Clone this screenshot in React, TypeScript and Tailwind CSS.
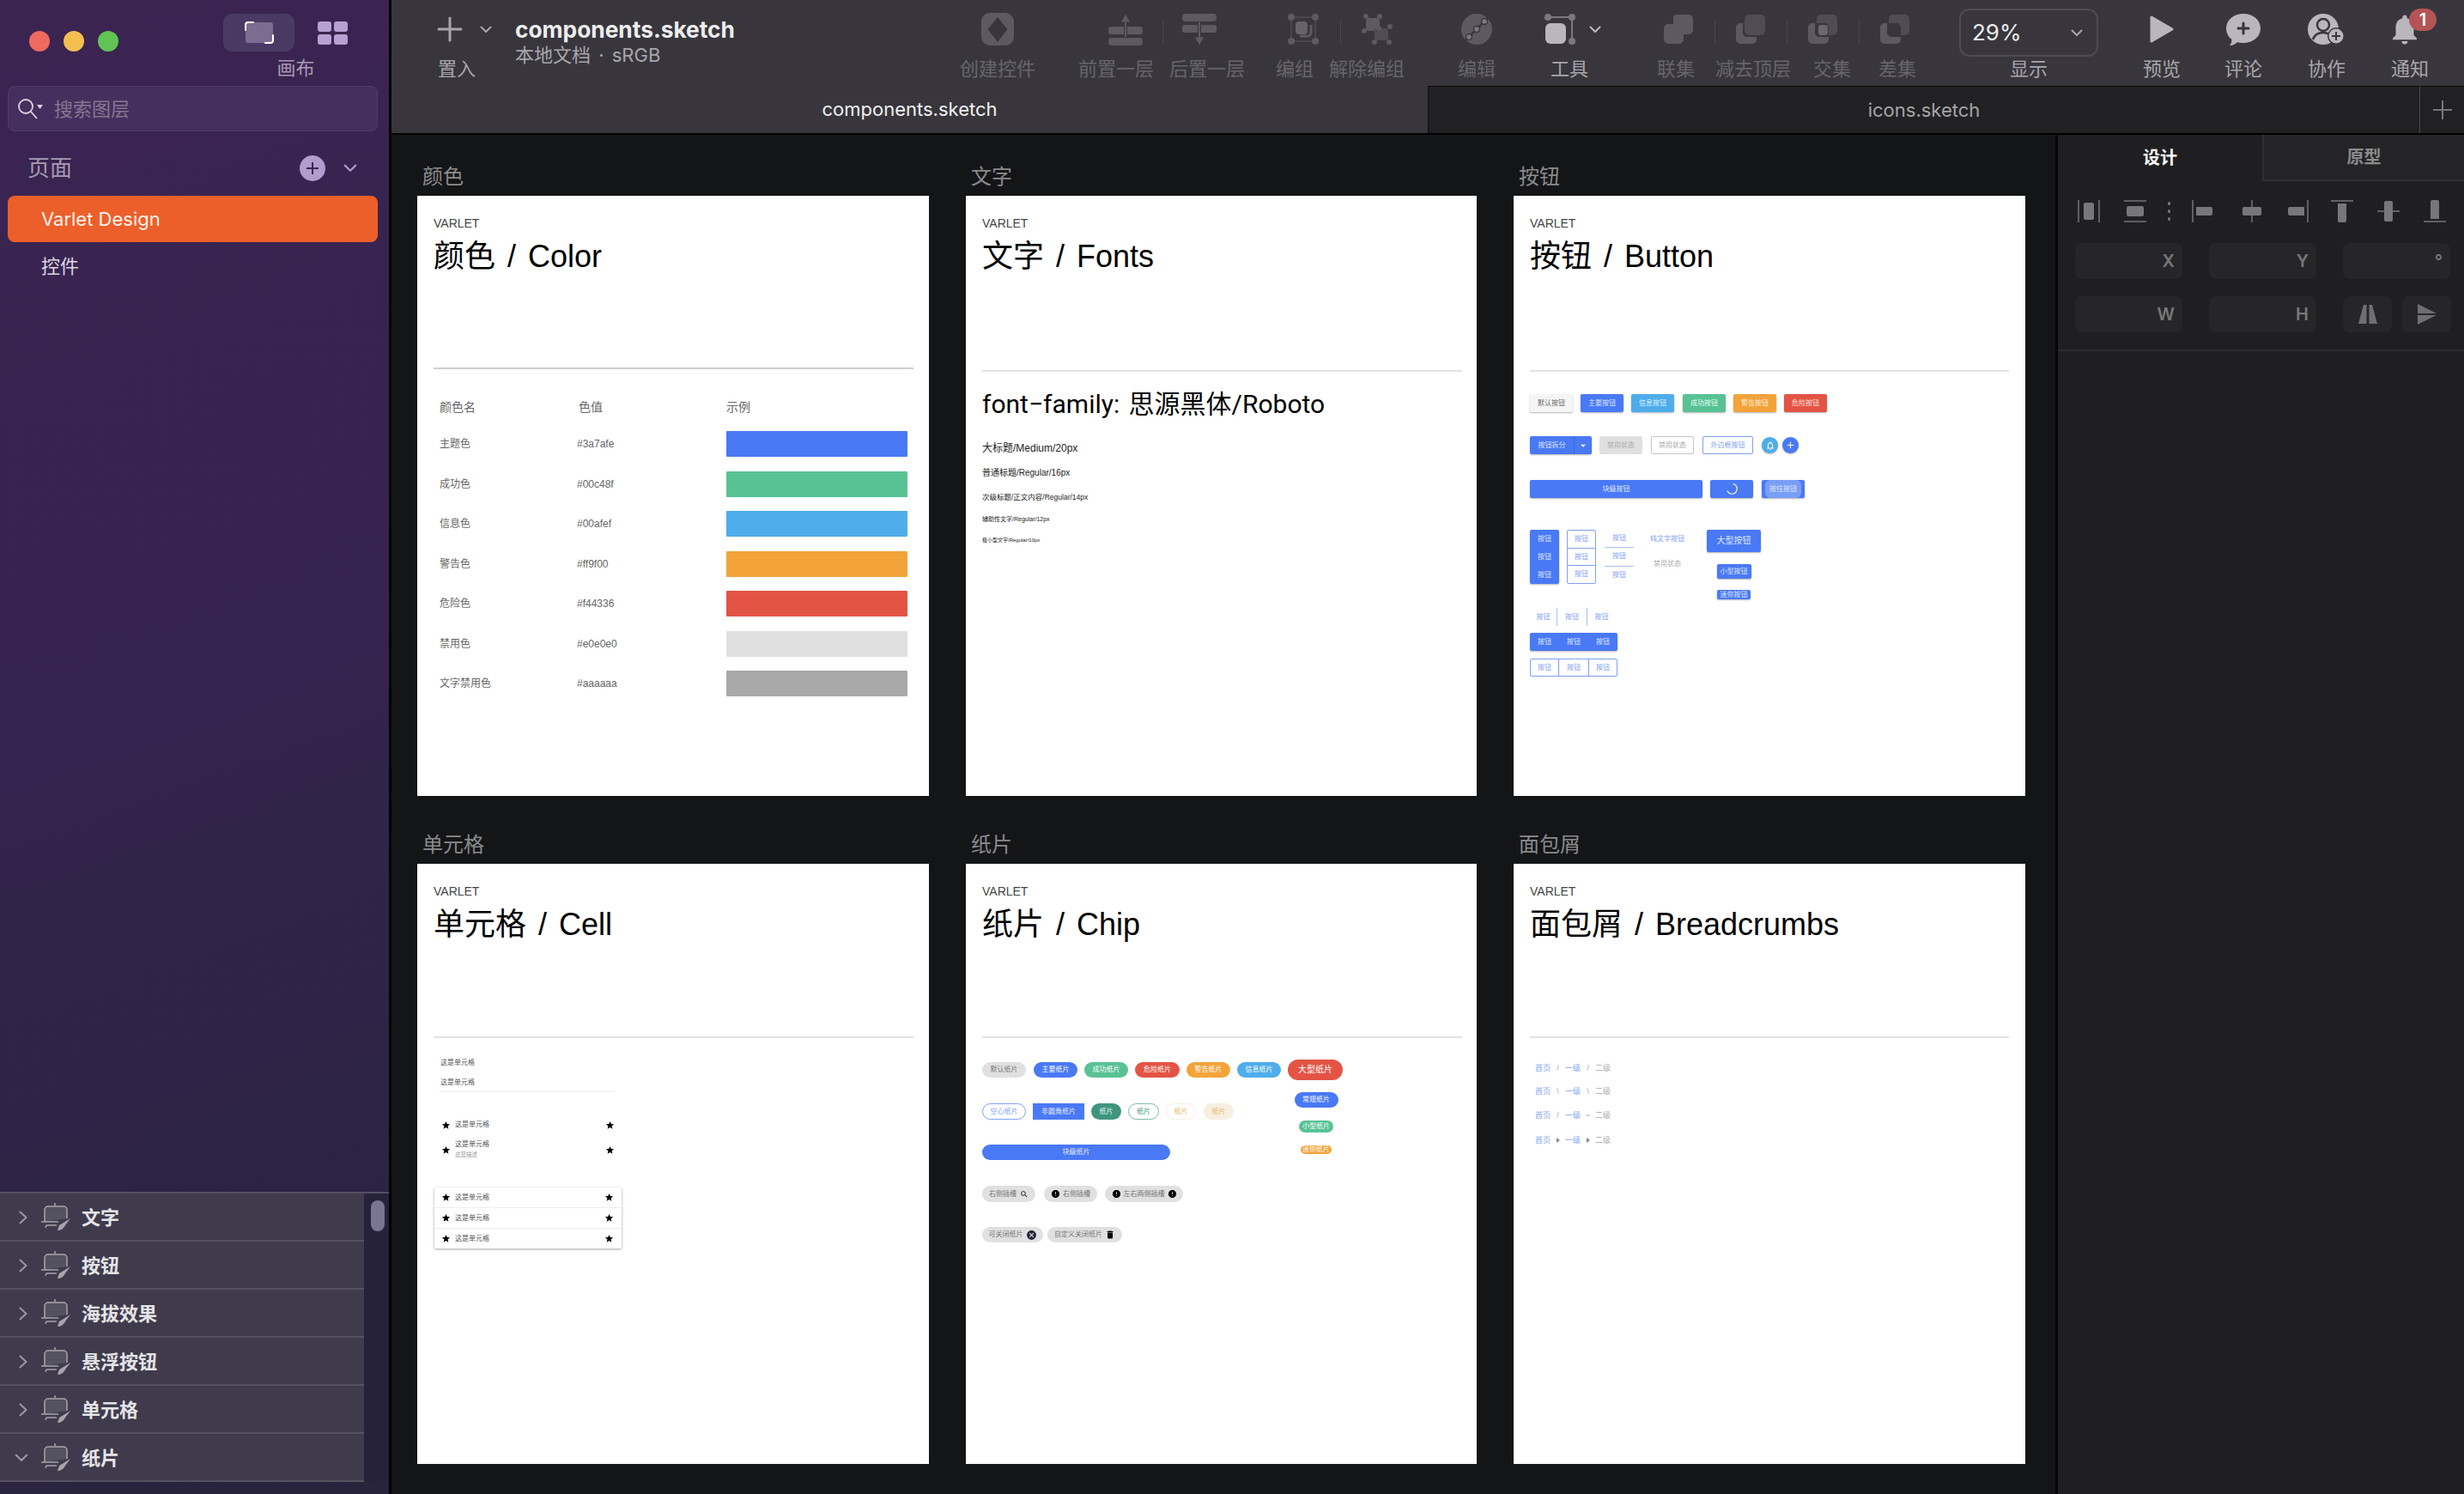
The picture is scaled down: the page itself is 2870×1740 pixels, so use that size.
import React from 'react'
import { MdAdd, MdArrowDropDown, MdCancel, MdDelete, MdError, MdNotifications, MdNotificationsNone, MdSearch, MdStar } from 'react-icons/md'

const DIM = '#5c5a60'
const LIT = '#b9b6be'

function Chevron({ className = '', color = '#a8a6ac' }: { className?: string; color?: string }) {
  return (
    <svg className={className} viewBox="0 0 14 9" fill="none" stroke={color} strokeWidth="2" strokeLinecap="round" strokeLinejoin="round">
      <path d="M1.5 1.5 7 7l5.5-5.5" />
    </svg>
  )
}

function Tool({ label, className, lit, children }: { label: string; className: string; lit?: boolean; children: React.ReactNode }) {
  return (
    <div className={`flex h-full shrink-0 flex-col items-center ${className}`}>
      <div className="flex h-[70px] w-full items-center justify-center pb-[8px] pt-[6px]">{children}</div>
      <span className={`whitespace-nowrap text-[22px] leading-[20px] ${lit ? 'text-[#a8a6ac]' : 'text-[#67656b]'}`}>{label}</span>
    </div>
  )
}

function Sep({ className }: { className: string }) {
  return <div className={`mt-[24px] h-[28px] w-px shrink-0 bg-[#47454b] ${className}`} />
}

function PathOps({ kind, className }: { kind: 'union' | 'subtract' | 'intersect' | 'diff'; className: string }) {
  return (
    <svg className={className} width="34" height="34" viewBox="0 0 34 34" fill={DIM}>
      {kind === 'union' && <path d="M15 0h14a5 5 0 0 1 5 5v13a5 5 0 0 1-5 5h-6v6a5 5 0 0 1-5 5H5a5 5 0 0 1-5-5V16a5 5 0 0 1 5-5h6V4a4 4 0 0 1 4-4z" />}
      {kind === 'subtract' && (
        <>
          <rect x="10" y="0" width="24" height="24" rx="5" fill="#4f4d53" />
          <path d="M5 10h3v11a5 5 0 0 0 5 5h11v3a5 5 0 0 1-5 5H5a5 5 0 0 1-5-5V15a5 5 0 0 1 5-5z" />
        </>
      )}
      {(kind === 'intersect' || kind === 'diff') && (
        <>
          <path fillRule="evenodd" d="M15 0h14a5 5 0 0 1 5 5v14a5 5 0 0 1-5 5h-5v-9a5 5 0 0 0-5-5h-9V5a5 5 0 0 1 5-5z" fill="#4f4d53" />
          <path d="M5 10h3v11a5 5 0 0 0 5 5h11v3a5 5 0 0 1-5 5H5a5 5 0 0 1-5-5V15a5 5 0 0 1 5-5z" />
          <rect x="12" y="12" width="11" height="12" rx="3" fill={kind === 'intersect' ? '#6a686e' : '#38363c'} />
        </>
      )}
    </svg>
  )
}

function Toolbar() {
  return (
    <div className="flex h-[100px] shrink-0 bg-[#38363c]">
      <Tool label="置入" lit className="ml-[54px] w-[44px]">
        <svg className="translate-x-[-13px]" width="30" height="30" viewBox="0 0 30 30" stroke="#a8a6ac" strokeWidth="3" strokeLinecap="round">
          <path d="M15 2v26M2 15h26" />
        </svg>
        <Chevron className="ml-[7px] mr-[-30px] h-[9px] w-[14px] shrink-0" />
      </Tool>
      <div className="ml-[46px] w-[255px] shrink-0 pt-[18px]">
        <div className="whitespace-nowrap text-[26.300px] font-bold leading-[34px] text-[#ededee]">components.sketch</div>
        <div className="mt-[-3px] whitespace-nowrap text-[22px] leading-[30px] text-[#a8a6ac] [word-spacing:3px]">本地文档 · sRGB</div>
      </div>
      <Tool label="创建控件" className="ml-[263px] w-[88px]">
        <svg width="38" height="38" viewBox="0 0 38 38">
          <path fill={DIM} fillRule="evenodd" d="M10 0h18a10 10 0 0 1 10 10v18a10 10 0 0 1-10 10H10A10 10 0 0 1 0 28V10A10 10 0 0 1 10 0zm9 5L7.500 19 19 34l11.500-15z" />
        </svg>
      </Tool>
      <Tool label="前置一层" className="ml-[50px] w-[88px]">
        <svg className="translate-x-[11px]" width="40" height="37" viewBox="0 0 40 37" fill={DIM}>
          <rect x="0" y="15" width="40" height="9" rx="3" />
          <rect x="0" y="28" width="40" height="9" rx="4" />
          <path d="M20 0l6 10h-4.500v18h-3V10H14z" stroke="#38363c" strokeWidth="1" />
        </svg>
      </Tool>
      <Sep className="ml-[10px]" />
      <Tool label="后置一层" className="ml-[7px] w-[88px]">
        <svg className="translate-x-[-9px]" width="40" height="37" viewBox="0 0 40 37" fill={DIM}>
          <rect x="0" y="0" width="40" height="9" rx="4" />
          <rect x="0" y="13" width="40" height="9" rx="3" />
          <path d="M20 37l-6-10h4.500V9h3v18H26z" stroke="#38363c" strokeWidth="1" />
        </svg>
      </Tool>
      <Tool label="编组" className="ml-[36px] w-[44px]">
        <svg className="translate-x-[10px]" width="36" height="36" viewBox="0 0 36 36" fill={DIM}>
          <path d="M4 4h28v28H4z" fill="none" stroke="#49474d" strokeWidth="2" />
          <circle cx="4" cy="4" r="4" />
          <circle cx="32" cy="4" r="4" />
          <circle cx="4" cy="32" r="4" />
          <circle cx="32" cy="32" r="4" />
          <rect x="9" y="9" width="14" height="15" rx="4" fill="#66646a" />
          <path d="M14 26h9a4 4 0 0 0 4-4v-9" fill="none" stroke={DIM} strokeWidth="3" />
        </svg>
      </Tool>
      <Sep className="ml-[31px]" />
      <Tool label="解除编组" className="ml-[-14px] w-[88px]">
        <svg className="translate-x-[12px]" width="36" height="36" viewBox="0 0 36 36" fill={DIM}>
          <rect x="5" y="5" width="16" height="15" rx="3" />
          <rect x="15" y="17" width="16" height="14" rx="3" fill="#4f4d53" />
          <circle cx="5" cy="3" r="3" />
          <circle cx="21" cy="3" r="3" />
          <circle cx="3" cy="20" r="3" />
          <circle cx="20" cy="17" r="3" />
          <circle cx="33" cy="15" r="3" />
          <circle cx="15" cy="33" r="3" />
          <circle cx="32" cy="33" r="3" />
        </svg>
      </Tool>
      <Tool label="编辑" className="ml-[62px] w-[44px]">
        <svg width="36" height="36" viewBox="0 0 36 36">
          <circle cx="18" cy="18" r="18" fill={DIM} />
          <path d="M3 33 33 3" stroke="#38363c" strokeWidth="2.500" />
          <circle cx="27" cy="9" r="3.500" fill="#7a787e" stroke="#38363c" strokeWidth="1.500" />
          <circle cx="18" cy="18" r="3.500" fill="#7a787e" stroke="#38363c" strokeWidth="1.500" />
          <circle cx="9" cy="27" r="3.500" fill="#7a787e" stroke="#38363c" strokeWidth="1.500" />
        </svg>
      </Tool>
      <Tool label="工具" lit className="ml-[64px] w-[44px]">
        <svg className="ml-[-14px] shrink-0" width="36" height="36" viewBox="0 0 36 36" fill="#7b797f">
          <path d="M4 4h28v28" fill="none" stroke="#7b797f" strokeWidth="2" />
          <circle cx="4" cy="4" r="4" />
          <circle cx="32" cy="4" r="4" />
          <circle cx="32" cy="32" r="4" />
          <rect x="1" y="11" width="24" height="24" rx="6" fill={LIT} />
        </svg>
        <Chevron className="ml-[16px] mr-[-22px] h-[9px] w-[14px] shrink-0" color={LIT} />
      </Tool>
      <Tool label="联集" className="ml-[80px] w-[44px]">
        <PathOps kind="union" className="translate-x-[3px]" />
      </Tool>
      <Sep className="ml-[23px]" />
      <Tool label="减去顶层" className="w-[88px]">
        <PathOps kind="subtract" className="translate-x-[-3px]" />
      </Tool>
      <Sep className="ml-[-5px]" />
      <Tool label="交集" className="ml-[30px] w-[44px]">
        <PathOps kind="intersect" className="translate-x-[-11px]" />
      </Tool>
      <Sep className="ml-[9px]" />
      <Tool label="差集" className="ml-[22px] w-[44px]">
        <PathOps kind="diff" className="translate-x-[-3px]" />
      </Tool>
      <div className="ml-[50px] flex w-[162px] shrink-0 flex-col items-center pt-[10px]">
        <div className="flex h-[56px] w-full items-center justify-between rounded-[12px] border-2 border-[#4e4c52] pl-[13px] pr-[16px]">
          <span className="text-[26px] leading-none text-[#ececed]">29%</span>
          <Chevron className="h-[9px] w-[14px]" />
        </div>
        <span className="mt-[4px] text-[22px] leading-[20px] text-[#a8a6ac]">显示</span>
      </div>
      <Tool label="预览" lit className="ml-[52px] w-[44px]">
        <svg width="28" height="32" viewBox="0 0 28 32">
          <path fill={LIT} stroke={LIT} strokeWidth="3" strokeLinejoin="round" d="M2 2 26 16 2 30z" />
        </svg>
      </Tool>
      <Tool label="评论" lit className="ml-[51px] w-[44px]">
        <svg width="40" height="37" viewBox="0 0 40 37">
          <path fill={LIT} d="M20 0c11 0 20 7 20 17S31 34 20 34c-3 0-5-.4-7-1-2 2-5 4-9 4 1.500-2 2.500-4 2.500-7C2.500 27 0 22 0 17 0 7 9 0 20 0z" />
          <path d="M20 11v12M14 17h12" stroke="#38363c" strokeWidth="3" strokeLinecap="round" />
        </svg>
      </Tool>
      <Tool label="协作" lit className="ml-[53px] w-[44px]">
        <svg width="44" height="37" viewBox="0 0 44 37">
          <circle cx="18" cy="18" r="18" fill={LIT} />
          <circle cx="18" cy="13" r="7" fill={LIT} stroke="#38363c" strokeWidth="2.500" />
          <path d="M6 30c2-6 7-8 12-8 3 0 5 .6 7 2" fill="none" stroke="#38363c" strokeWidth="2.500" />
          <circle cx="33" cy="26" r="10" fill="#38363c" />
          <circle cx="33" cy="26" r="8.500" fill={LIT} />
          <path d="M33 21v10M28 26h10" stroke="#38363c" strokeWidth="2" />
        </svg>
      </Tool>
      <Tool label="通知" lit className="relative ml-[53px] w-[44px]">
        <MdNotifications className="ml-[-12px] shrink-0 text-[#b9b6be]" size={42} />
        <span className="absolute left-[21px] top-[10px] flex h-[26px] w-[32px] items-center justify-center rounded-full bg-[#b45454] text-[20px] font-semibold leading-none text-white">1</span>
      </Tool>
    </div>
  )
}

function Tabs() {
  return (
    <div className="flex h-[57px] shrink-0 border-b-2 border-black text-[22px] leading-[55px]">
      <div className="w-[1207px] bg-[#38363c] text-center text-[#f0f0f1]">components.sketch</div>
      <div className="w-[1155px] border-l border-t border-[#0c0c0d] bg-[#212123] text-center text-[#a5a5a7]">icons.sketch</div>
      <div className="flex flex-1 items-center justify-center border-l border-t border-l-[#4a4a4c] border-t-[#0c0c0d] bg-[#212123]">
        <svg width="22" height="22" viewBox="0 0 22 22" stroke="#77777a" strokeWidth="2">
          <path d="M11 0v22M0 11h22" />
        </svg>
      </div>
    </div>
  )
}

function LayerRow({ name, open }: { name: string; open?: boolean }) {
  return (
    <div className="flex h-[56px] items-center border-t-2 border-[#55505f] bg-[#3f3b4d] pt-[2px]">
      {open ? (
        <Chevron className="ml-[17px] mr-[14px] h-[10px] w-[16px]" color="#9a97a3" />
      ) : (
        <svg className="ml-[22px] mr-[15px]" width="10" height="16" viewBox="0 0 10 16" fill="none" stroke="#9a97a3" strokeWidth="2" strokeLinecap="round" strokeLinejoin="round">
          <path d="m1.500 1.500 7 6.500-7 6.500" />
        </svg>
      )}
      <svg width="36" height="34" viewBox="0 0 36 34" fill="none" stroke="#a7a4ad" strokeWidth="1.500">
        <path d="M5 22V8a4 4 0 0 1 4-4h18a4 4 0 0 1 4 4v10" fill="#55525f" />
        <path d="M1 22h20M7 26h12M7 26l-1 3M17 3V0" />
        <path d="M20 32c4 0 7-2 9-6l6-8-8 5-5 3z" fill="#a7a4ad" stroke="none" />
      </svg>
      <span className="ml-[12px] text-[22px] font-bold leading-none text-[#e4e3e6]">{name}</span>
    </div>
  )
}

function Sidebar() {
  return (
    <aside className="flex h-full w-[456px] shrink-0 flex-col border-r-[3px] border-black bg-[linear-gradient(160deg,#3c2451_0%,#35234f_45%,#27243c_100%)]">
      <div className="flex h-[100px] shrink-0">
        <span className="ml-[34px] mt-[36px] h-[24px] w-[24px] rounded-full bg-[#ee6a5e]" />
        <span className="ml-[16px] mt-[36px] h-[24px] w-[24px] rounded-full bg-[#f5bf4f]" />
        <span className="ml-[16px] mt-[36px] h-[24px] w-[24px] rounded-full bg-[#61c454]" />
        <div className="ml-[122px] flex flex-col items-center">
          <div className="flex">
            <div className="mt-[16px] flex h-[44px] w-[83px] items-center justify-center rounded-[10px] bg-[#4a3a63]">
              <svg width="34" height="26" viewBox="0 0 34 26" fill="none">
                <rect x="1" y="1" width="32" height="24" rx="3" fill="#7d6c91" />
                <path d="M1 10V4a3 3 0 0 1 3-3h6M33 16v6a3 3 0 0 1-3 3h-6" stroke="#fff" strokeWidth="2" strokeLinecap="round" />
              </svg>
            </div>
            <svg className="ml-[27px] mt-[25px]" width="35" height="27" viewBox="0 0 35 27" fill="#b7a0d2">
              <rect width="16" height="12" rx="3" />
              <rect x="19" width="16" height="12" rx="3" />
              <rect y="15" width="16" height="12" rx="3" />
              <rect x="19" y="15" width="16" height="12" rx="3" />
            </svg>
          </div>
          <span className="ml-[24px] mt-[9px] text-[22px] leading-[20px] text-[#a79bb5]">画布</span>
        </div>
      </div>
      <div className="ml-[9px] mr-[13px] flex h-[53px] shrink-0 items-center rounded-[8px] border border-[#4d3f66] bg-[#452f5e] pl-[11px]">
        <svg width="29" height="24" viewBox="0 0 29 24" fill="none" stroke="#d8d2e0" strokeWidth="1.800">
          <circle cx="9" cy="9" r="8" />
          <path d="m15 15 7 8" />
          <path d="M22 7h7l-3.500 5z" fill="#d8d2e0" stroke="none" />
        </svg>
        <span className="ml-[13px] text-[22px] leading-none text-[#84778f]">搜索图层</span>
      </div>
      <div className="flex h-[75px] shrink-0 items-center pl-[32px] pt-[11px]">
        <span className="text-[26px] leading-none text-[#a79bb5]">页面</span>
        <span className="ml-[265px] flex h-[30px] w-[30px] items-center justify-center rounded-full bg-[#b29bcd]">
          <MdAdd className="text-[#3a2750]" size={24} />
        </span>
        <Chevron className="ml-[20px] h-[10px] w-[18px]" color="#b29bcd" />
      </div>
      <div className="ml-[9px] mr-[13px] flex h-[54px] shrink-0 items-center rounded-[8px] bg-[#ec5f2a] pl-[39px] text-[22px] leading-none text-[#fff3ec]">Varlet Design</div>
      <div className="flex h-[56px] shrink-0 items-center pl-[48px] text-[22px] leading-none text-[#ddd6e4]">控件</div>
      <div className="mt-auto mb-[14px] flex">
        <div className="flex-1 border-b-2 border-[#55505f]">
          <LayerRow name="文字" />
          <LayerRow name="按钮" />
          <LayerRow name="海拔效果" />
          <LayerRow name="悬浮按钮" />
          <LayerRow name="单元格" />
          <LayerRow name="纸片" open />
        </div>
        <div className="w-[29px] border-t-2 border-[#55505f] bg-[#26223a] pl-[8px] pt-[8px]">
          <div className="h-[36px] w-[16px] rounded-full bg-[#7a7590]" />
        </div>
      </div>
    </aside>
  )
}

function Artboard({ label, title, bodyClass, width = 'w-[596px]', children }: { label: string; title: string; bodyClass: string; width?: string; children: React.ReactNode }) {
  return (
    <div className={`shrink-0 ${width}`}>
      <div className="ml-[6px] text-[24px] leading-[24px] text-[#8a8a8c]">{label}</div>
      <div className="mt-[10px] h-[699px] bg-white pl-[19px] font-['Liberation_Sans','Noto_Sans_CJK_SC',sans-serif]">
        <div className="pt-[23px] text-[14px] leading-[18px] text-[#444]">VARLET</div>
        <div className="mt-[8px] text-[36px] leading-[44px] text-black [word-spacing:4px]">{title}</div>
        <div className={bodyClass}>{children}</div>
      </div>
    </div>
  )
}

const COLORS = [
  { name: '主题色', hex: '#3a7afe', swatch: 'bg-[#4a79f5]' },
  { name: '成功色', hex: '#00c48f', swatch: 'bg-[#58c295]' },
  { name: '信息色', hex: '#00afef', swatch: 'bg-[#4eadea]' },
  { name: '警告色', hex: '#ff9f00', swatch: 'bg-[#f3a33a]' },
  { name: '危险色', hex: '#f44336', swatch: 'bg-[#e35444]' },
  { name: '禁用色', hex: '#e0e0e0', swatch: 'bg-[#e0e0e0]' },
  { name: '文字禁用色', hex: '#aaaaaa', swatch: 'bg-[#a9a9a9]' },
]

function ColorBoard() {
  return (
    <Artboard label="颜色" title="颜色 / Color" bodyClass="mt-[107px] w-[559px]">
      <div className="h-[2px] bg-[#cfcfcf]" />
      <div className="ml-[7px] mt-[34px] flex text-[14px] leading-[20px] text-[#666]">
        <span className="w-[162px]">颜色名</span>
        <span className="w-[172px]">色值</span>
        <span>示例</span>
      </div>
      <div className="ml-[7px] mt-[18px] flex flex-col gap-[16.5px]">
        {COLORS.map((c) => (
          <div key={c.name} className="flex h-[30px] items-center text-[12px] text-[#666]">
            <span className="w-[160px]">{c.name}</span>
            <span className="w-[174px]">{c.hex}</span>
            <div className={`h-full w-[211px] rounded-[1px] ${c.swatch}`} />
          </div>
        ))}
      </div>
    </Artboard>
  )
}

function FontBoard() {
  return (
    <Artboard label="文字" title="文字 / Fonts" width="w-[595px]" bodyClass="mt-[110px] w-[559px] text-[#222]">
      <div className="h-[2px] bg-[#e2e2e2]" />
      <div className="mt-[20px] whitespace-nowrap font-['Roboto','Noto_Sans_CJK_SC',sans-serif] text-[30px] leading-[36px] text-black [word-spacing:3px]">font−family: 思源黑体/Roboto</div>
      <div className="mt-[25px] h-[16px] text-[12px] leading-[16px]">大标题/Medium/20px</div>
      <div className="mt-[13px] h-[16px] text-[10px] leading-[16px]">普通标题/Regular/16px</div>
      <div className="mt-[12px] h-[16px] text-[8.500px] leading-[16px]">次级标题/正文内容/Regular/14px</div>
      <div className="mt-[10px] h-[16px] text-[7px] leading-[16px]">辅助性文字/Regular/12px</div>
      <div className="mt-[8px] h-[16px] text-[6px] leading-[16px]">极小型文字/Regular/10px</div>
    </Artboard>
  )
}

const BTN = 'flex shrink-0 items-center justify-center rounded-[2px] text-[8px] leading-none shadow-[0_1px_2px_rgba(0,0,0,0.3)]'
const PRIMARY = 'bg-[#4a79f5] text-[#dfe8ff]'
const OUTLINE = 'text-[#7f9ff5]'

function ButtonBoard() {
  return (
    <Artboard label="按钮" title="按钮 / Button" bodyClass="mt-[110px]">
      <div className="h-[2px] w-[558px] bg-[#e2e2e2]" />
      <div className="mt-[26px] flex h-[21px] gap-[9px]">
        <div className={`${BTN} w-[50px] bg-[#f5f5f5] text-[#666]`}>默认按钮</div>
        <div className={`${BTN} w-[50px] ${PRIMARY}`}>主要按钮</div>
        <div className={`${BTN} w-[50px] bg-[#4eadea] text-[#dff3ff]`}>信息按钮</div>
        <div className={`${BTN} ml-px w-[50px] bg-[#58c295] text-[#e3fff2]`}>成功按钮</div>
        <div className={`${BTN} w-[50px] bg-[#f3a33a] text-[#fff0d9]`}>警告按钮</div>
        <div className={`${BTN} w-[50px] bg-[#e35444] text-[#ffe3df]`}>危险按钮</div>
      </div>
      <div className="mt-[28px] flex h-[21px] items-center">
        <div className={`${BTN} h-full w-[72px] ${PRIMARY}`}>
          <span className="flex-1 text-center">按钮拆分</span>
          <span className="flex h-full w-[21px] items-center justify-center border-l border-[#3d68d8]">
            <MdArrowDropDown size={14} className="text-white" />
          </span>
        </div>
        <div className="ml-[9px] flex h-full w-[50px] items-center justify-center rounded-[2px] bg-[#e0e0e0] text-[8px] text-[#aaa]">禁用状态</div>
        <div className="ml-[10px] flex h-full w-[50px] items-center justify-center rounded-[2px] border border-[#c6c6c6] text-[8px] text-[#aaa]">禁用状态</div>
        <div className={`ml-[10px] flex h-full w-[59px] items-center justify-center rounded-[2px] border border-[#7f9ff5] text-[8px] ${OUTLINE}`}>外边框按钮</div>
        <div className="ml-[10px] flex h-[19px] w-[19px] items-center justify-center rounded-full bg-[#4eadea] shadow-[0_1px_2px_rgba(0,0,0,0.3)]">
          <MdNotificationsNone className="text-white" size={12} />
        </div>
        <div className="ml-[5px] flex h-[19px] w-[19px] items-center justify-center rounded-full bg-[#4a79f5] shadow-[0_1px_2px_rgba(0,0,0,0.3)]">
          <MdAdd className="text-white" size={13} />
        </div>
      </div>
      <div className="mt-[30px] flex h-[21px]">
        <div className={`${BTN} w-[201px] ${PRIMARY}`}>块级按钮</div>
        <div className={`${BTN} ml-[9px] w-[50px] bg-[#4a79f5]`}>
          <svg width="15" height="15" viewBox="0 0 15 15" fill="none" stroke="#fff" strokeWidth="1.200" strokeLinecap="round">
            <path d="M9 1.500A6 6 0 1 1 2 10" />
          </svg>
        </div>
        <div className={`${BTN} ml-[10px] w-[50px] px-[4px] ${PRIMARY}`}>
          <span className="flex h-full w-full items-center justify-center rounded-[6px] bg-[#7a9ef8]">按住按钮</span>
        </div>
      </div>
      <div className="mt-[37px] flex">
        <div className="w-[190px] shrink-0">
          <div className="flex h-[63px]">
            <div className={`${BTN} w-[34px] flex-col ${PRIMARY}`}>
              <span className="flex h-[21px] items-center">按钮</span>
              <span className="flex h-[21px] items-center">按钮</span>
              <span className="flex h-[21px] items-center">按钮</span>
            </div>
            <div className={`ml-[9px] flex w-[34px] flex-col divide-y divide-[#7f9ff5] rounded-[2px] border border-[#7f9ff5] text-[8px] ${OUTLINE}`}>
              <span className="flex flex-1 items-center justify-center">按钮</span>
              <span className="flex flex-1 items-center justify-center">按钮</span>
              <span className="flex flex-1 items-center justify-center">按钮</span>
            </div>
            <div className={`ml-[10px] flex w-[34px] flex-col divide-y divide-[#a9bff8] text-[8px] ${OUTLINE}`}>
              <span className="flex flex-1 items-center justify-center">按钮</span>
              <span className="flex flex-1 items-center justify-center">按钮</span>
              <span className="flex flex-1 items-center justify-center">按钮</span>
            </div>
            <div className="ml-[9px] flex w-[60px] flex-col items-center text-[8px]">
              <span className={`flex h-[21px] items-center ${OUTLINE}`}>纯文字按钮</span>
              <span className="mt-[8px] flex h-[21px] items-center text-[#aaa]">禁用状态</span>
            </div>
          </div>
          <div className={`mt-[28px] flex h-[21px] w-[102px] text-[8px] ${OUTLINE}`}>
            <span className="flex w-[32px] items-center justify-center border-r border-[#a9bff8]">按钮</span>
            <span className="flex w-[35px] items-center justify-center border-r border-[#a9bff8]">按钮</span>
            <span className="flex w-[33px] items-center justify-center">按钮</span>
          </div>
          <div className={`${BTN} mt-[8px] h-[21px] w-[102px] ${PRIMARY}`}>
            <span className="flex-1 text-center">按钮</span>
            <span className="flex-1 text-center">按钮</span>
            <span className="flex-1 text-center">按钮</span>
          </div>
          <div className={`mt-[9px] flex h-[21px] w-[102px] rounded-[2px] border border-[#7f9ff5] text-[8px] ${OUTLINE}`}>
            <span className="flex w-[33px] items-center justify-center border-r border-[#7f9ff5]">按钮</span>
            <span className="flex w-[35px] items-center justify-center border-r border-[#7f9ff5]">按钮</span>
            <span className="flex flex-1 items-center justify-center">按钮</span>
          </div>
        </div>
        <div className="ml-[16px] flex w-[63px] flex-col items-center">
          <div className={`${BTN} h-[26px] w-[63px] text-[10px] ${PRIMARY}`}>大型按钮</div>
          <div className={`${BTN} mt-[14px] h-[17px] w-[40px] text-[6.500px] ${PRIMARY}`}>小型按钮</div>
          <div className={`${BTN} mt-[13px] h-[11px] w-[39px] text-[5.500px] ${PRIMARY}`}>迷你按钮</div>
        </div>
      </div>
    </Artboard>
  )
}

function Star({ className = '' }: { className?: string }) {
  return <MdStar className={`shrink-0 text-black ${className}`} size={11} />
}

function CellRow({ text }: { text: string }) {
  return (
    <div className="flex flex-1 items-center pl-[8px] pr-[9px]">
      <Star />
      <span className="ml-[5px] flex-1 text-[8px] leading-none text-[#555]">{text}</span>
      <Star />
    </div>
  )
}

function CellBoard() {
  return (
    <Artboard label="单元格" title="单元格 / Cell" bodyClass="mt-[108px] text-[8px] text-[#555]">
      <div className="h-[2px] w-[559px] bg-[#e2e2e2]" />
      <div className="ml-[7px] w-[204px]">
        <div className="mt-[21px] pl-px leading-[16px]">这是单元格</div>
        <div className="mt-[7px] h-[19px] border-b border-[#eeeeee] pl-px leading-[16px]">这是单元格</div>
        <div className="mt-[30px] flex h-[16px] items-center pl-[2px]">
          <Star />
          <span className="ml-[5px] flex-1 leading-none">这是单元格</span>
          <Star />
        </div>
        <div className="mt-[7px] flex h-[28px] items-center pl-[2px]">
          <Star />
          <span className="ml-[5px] flex-1">
            <span className="block leading-[12px]">这是单元格</span>
            <span className="block text-[6.500px] leading-[12px] text-[#999]">这是描述</span>
          </span>
          <Star />
        </div>
      </div>
      <div className="ml-px mt-[30px] flex h-[71px] w-[218px] flex-col divide-y divide-[#eeeeee] bg-white shadow-[0_1px_3px_rgba(0,0,0,0.35)]">
        <CellRow text="这是单元格" />
        <CellRow text="这是单元格" />
        <CellRow text="这是单元格" />
      </div>
    </Artboard>
  )
}

const CHIP = 'flex shrink-0 items-center justify-center rounded-full text-[8px] leading-none'
const GREY = 'bg-[#e0e0e0] text-[#777]'

function ChipBoard() {
  return (
    <Artboard label="纸片" title="纸片 / Chip" width="w-[595px]" bodyClass="mt-[108px]">
      <div className="h-[2px] w-[559px] bg-[#e2e2e2]" />
      <div className="mt-[25px] flex h-[24px] items-center text-white">
        <div className={`${CHIP} h-[18px] w-[51px] ${GREY}`}>默认纸片</div>
        <div className={`${CHIP} ml-[9px] h-[18px] w-[51px] bg-[#4a79f5]`}>主要纸片</div>
        <div className={`${CHIP} ml-[8px] h-[18px] w-[51px] bg-[#58c295]`}>成功纸片</div>
        <div className={`${CHIP} ml-[8px] h-[18px] w-[52px] bg-[#e35444]`}>危险纸片</div>
        <div className={`${CHIP} ml-[8px] h-[18px] w-[51px] bg-[#f3a33a]`}>警告纸片</div>
        <div className={`${CHIP} ml-[8px] h-[18px] w-[51px] bg-[#4eadea]`}>信息纸片</div>
        <div className={`${CHIP} ml-[8px] h-[24px] w-[64px] bg-[#e35444] text-[10px]`}>大型纸片</div>
      </div>
      <div className="mt-[14px] flex">
        <div className="w-[357px] shrink-0 pt-[13px]">
          <div className="flex h-[19px] items-center">
            <div className={`${CHIP} h-full w-[51px] border border-[#7f9ff5] text-[#7f9ff5]`}>空心纸片</div>
            <div className="ml-[8px] flex h-full w-[60px] items-center justify-center bg-[#4a79f5] text-[8px] text-[#e6edff]">非圆角纸片</div>
            <div className={`${CHIP} ml-[8px] h-full w-[35px] bg-[#40957f] text-[#e3f5ef]`}>纸片</div>
            <div className={`${CHIP} ml-[8px] h-full w-[36px] border border-[#7dbbab] text-[#40957f]`}>纸片</div>
            <div className={`${CHIP} ml-[8px] h-full w-[35px] border border-[#f8efe0] text-[#e5b566]`}>纸片</div>
            <div className={`${CHIP} ml-[9px] h-full w-[35px] bg-[#f8efe0] text-[#e5b566]`}>纸片</div>
          </div>
          <div className={`${CHIP} mt-[29px] h-[18px] w-[219px] bg-[#4a79f5] text-[#e6edff]`}>块级纸片</div>
          <div className="mt-[30px] flex h-[19px]">
            <div className={`${CHIP} h-full w-[62px] gap-[4px] ${GREY}`}>
              右侧插槽
              <MdSearch className="text-[#222]" size={10} />
            </div>
            <div className={`${CHIP} ml-[10px] h-full w-[62px] gap-[3px] ${GREY}`}>
              <MdError className="text-black" size={11} />
              右侧插槽
            </div>
            <div className={`${CHIP} ml-[9px] h-full w-[91px] gap-[3px] ${GREY}`}>
              <MdError className="text-black" size={11} />
              左右两侧插槽
              <MdError className="text-black" size={11} />
            </div>
          </div>
          <div className="mt-[29px] flex h-[18px]">
            <div className={`${CHIP} h-full w-[71px] gap-[3px] ${GREY}`}>
              可关闭纸片
              <MdCancel className="text-[#24243a]" size={13} />
            </div>
            <div className={`${CHIP} ml-[5px] h-full w-[87px] gap-[3px] ${GREY}`}>
              自定义关闭纸片
              <MdDelete className="text-black" size={12} />
            </div>
          </div>
        </div>
        <div className="flex w-[64px] flex-col items-center text-white">
          <div className={`${CHIP} h-[18px] w-[51px] bg-[#4a79f5]`}>常规纸片</div>
          <div className={`${CHIP} mt-[15px] h-[14px] w-[40px] bg-[#58c295] text-[6.500px]`}>小型纸片</div>
          <div className={`${CHIP} mt-[15px] h-[10px] w-[36px] bg-[#f3a33a] text-[5.500px]`}>迷你纸片</div>
        </div>
      </div>
    </Artboard>
  )
}

function Crumb({ sep, sep2, className }: { sep: React.ReactNode; sep2?: React.ReactNode; className: string }) {
  return (
    <div className={`ml-[6px] flex h-[16px] items-center text-[9px] leading-none ${className}`}>
      <span className="w-[18px] text-[#7f9ff5]">首页</span>
      <span className="flex w-[17px] justify-center text-[#aaa]">{sep}</span>
      <span className="w-[18px] text-[#7f9ff5]">一级</span>
      <span className="flex w-[17px] justify-center text-[#aaa]">{sep2 ?? sep}</span>
      <span className="text-[#aaa]">二级</span>
    </div>
  )
}

function CrumbBoard() {
  const arrow = <span className="h-0 w-0 border-y-[3px] border-l-[4px] border-y-transparent border-l-[#888]" />
  return (
    <Artboard label="面包屑" title="面包屑 / Breadcrumbs" bodyClass="mt-[108px]">
      <div className="h-[2px] w-[558px] bg-[#e2e2e2]" />
      <Crumb sep="/" className="mt-[27px]" />
      <Crumb sep="\" className="mt-[11px]" />
      <Crumb sep="/" sep2="~" className="mt-[12px]" />
      <Crumb sep={arrow} className="mt-[13px]" />
    </Artboard>
  )
}

function AlignIcon({ d, bar, className }: { d: string; bar: string; className?: string }) {
  return (
    <svg className={`shrink-0 ${className ?? ''}`} width="26" height="26" viewBox="0 0 26 26" fill="#77777a">
      <path d={bar} stroke="#77777a" strokeWidth="1.500" fill="none" />
      <path d={d} />
    </svg>
  )
}

function Field({ label, className = '' }: { label: string; className?: string }) {
  return (
    <div className={`flex h-[42px] w-[125px] items-center justify-end rounded-[8px] bg-[#262628] pr-[9px] text-[20px] font-semibold leading-none text-[#77777a] ${className}`}>{label}</div>
  )
}

function RightPanel() {
  return (
    <aside className="h-full flex-1 border-l-[3px] border-[#060607] bg-[#1f1f21]">
      <div className="flex h-[54px] text-[20px] font-bold leading-none">
        <div className="flex w-[238px] items-center justify-center text-white">设计</div>
        <div className="flex flex-1 items-center justify-center border-b-2 border-l-2 border-[#2f2f31] bg-[#242426] text-[#8b8b8d]">原型</div>
      </div>
      <div className="ml-[23px] mt-[22px] flex h-[26px] items-center">
        <AlignIcon bar="M1 0v26M25 0v26" d="M9 3h8a2 2 0 0 1 2 2v16a2 2 0 0 1-2 2H9a2 2 0 0 1-2-2V5a2 2 0 0 1 2-2z" />
        <AlignIcon className="ml-[28px]" bar="M0 1h26M0 25h26" d="M5 7h16a2 2 0 0 1 2 2v8a2 2 0 0 1-2 2H5a2 2 0 0 1-2-2V9a2 2 0 0 1 2-2z" />
        <div className="ml-[25px] flex h-[26px] flex-col items-center justify-between py-[2px]">
          <span className="h-[4px] w-[3px] rounded-full bg-[#77777a]" />
          <span className="h-[4px] w-[3px] rounded-full bg-[#77777a]" />
          <span className="h-[4px] w-[3px] rounded-full bg-[#77777a]" />
        </div>
        <AlignIcon className="ml-[25px]" bar="M1 0v26" d="M5 8h17a2 2 0 0 1 2 2v6a2 2 0 0 1-2 2H5z" />
        <AlignIcon className="ml-[31px]" bar="M13 0v26" d="M4 8h18a2 2 0 0 1 2 2v6a2 2 0 0 1-2 2H4a2 2 0 0 1-2-2v-6a2 2 0 0 1 2-2z" />
        <AlignIcon className="ml-[27px]" bar="M25 0v26" d="M4 8h17v10H4a2 2 0 0 1-2-2v-6a2 2 0 0 1 2-2z" />
        <AlignIcon className="ml-[26px]" bar="M0 1h26" d="M8 4h10v20a2 2 0 0 1-2 2h-6a2 2 0 0 1-2-2z" />
        <AlignIcon className="ml-[28px]" bar="M0 13h26" d="M10 1h6a2 2 0 0 1 2 2v20a2 2 0 0 1-2 2h-6a2 2 0 0 1-2-2V3a2 2 0 0 1 2-2z" />
        <AlignIcon className="ml-[28px]" bar="M0 25h26" d="M10 0h6a2 2 0 0 1 2 2v20H8V2a2 2 0 0 1 2-2z" />
      </div>
      <div className="ml-[20px] mt-[24px] flex gap-[31px]">
        <Field label="X" />
        <Field label="Y" />
        <Field label="°" />
      </div>
      <div className="ml-[20px] mt-[20px] flex gap-[31px]">
        <Field label="W" />
        <Field label="H" />
        <div className="flex gap-[12px]">
          <div className="flex h-[42px] w-[57px] items-center justify-center rounded-[8px] bg-[#262628]">
            <svg width="24" height="24" viewBox="0 0 24 24" fill="#6f6f72">
              <path d="M7 1 1 23h9.500V1zM17 1l6 22h-9.500V1z" />
            </svg>
          </div>
          <div className="flex h-[42px] w-[57px] items-center justify-center rounded-[8px] bg-[#262628]">
            <svg width="22" height="24" viewBox="0 0 22 24" fill="#6f6f72">
              <path d="M0 0l22 11H0zM0 13h22L0 24z" />
            </svg>
          </div>
        </div>
      </div>
      <div className="mt-[20px] h-[2px] bg-[#2c2c2e]" />
    </aside>
  )
}

export default function App() {
  return (
    <div className="flex h-[1740px] w-[2870px] overflow-hidden font-['Inter','Noto_Sans_CJK_SC',sans-serif]">
      <Sidebar />
      <div className="flex min-w-0 flex-1 flex-col">
        <Toolbar />
        <Tabs />
        <div className="flex min-h-0 flex-1">
          <main className="w-[1938px] shrink-0 overflow-hidden bg-[#141517] pl-[30px] pt-[37px]">
            <div className="flex gap-x-[43px]">
              <ColorBoard />
              <FontBoard />
              <ButtonBoard />
            </div>
            <div className="mt-[45px] flex gap-x-[43px]">
              <CellBoard />
              <ChipBoard />
              <CrumbBoard />
            </div>
          </main>
          <RightPanel />
        </div>
      </div>
    </div>
  )
}
